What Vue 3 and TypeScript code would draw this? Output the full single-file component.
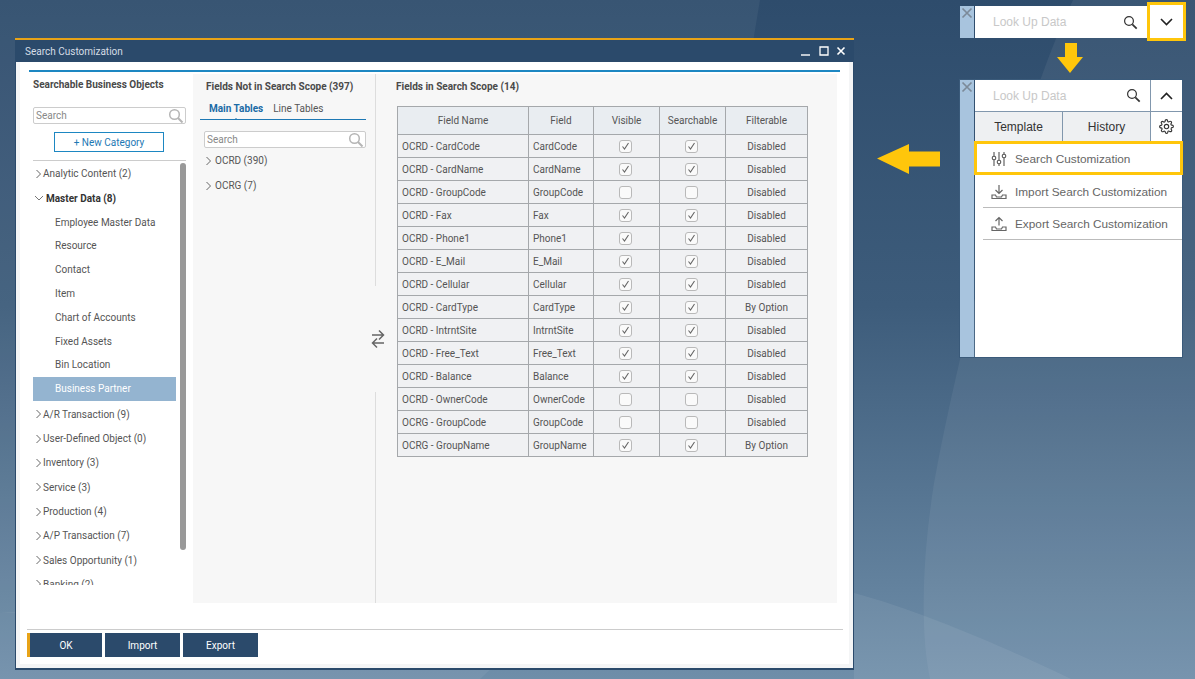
<template>
  <div class="desktop">
    <svg class="wallpaper" viewBox="0 0 1195 679" preserveAspectRatio="none">
      <defs>
        <linearGradient id="bgGrad" x1="0" y1="0" x2="0" y2="1">
          <stop offset="0" stop-color="#2e4c6c" />
          <stop offset="0.45" stop-color="#3d5c7b" />
          <stop offset="1" stop-color="#6f8ea9" />
        </linearGradient>
      </defs>
      <rect width="1195" height="679" fill="url(#bgGrad)" />
      <path d="M1073 0 C1020 110 960 340 934 483 C925 540 918 620 930 679 L1195 679 L1195 0 Z" fill="#fff" opacity="0.06" />
      <path d="M0 0 H760 L740 120 V613 H0 Z" fill="#fff" opacity="0.05" />
      <path d="M854 593 C925 612 1010 650 1071 679 L854 679 Z" fill="#fff" opacity="0.07" />
      <path d="M0 613 C150 600 400 620 492 668 L480 679 L0 679 Z" fill="#fff" opacity="0.06" />
    </svg>

    <!-- main window -->
    <section class="window">
      <header class="titlebar">
        <span>Search Customization</span>
        <div class="win-btns">
          <svg width="12" height="12" viewBox="0 0 12 12"><path d="M1 10h9" stroke="#fff" stroke-width="1.4" /></svg>
          <svg width="12" height="12" viewBox="0 0 12 12"><path d="M2 2h8v8H2z" fill="none" stroke="#fff" stroke-width="1.3" /></svg>
          <svg width="12" height="12" viewBox="0 0 12 12"><path d="M2.500 2.500l7 7M9.500 2.500l-7 7" stroke="#fff" stroke-width="1.6" /></svg>
        </div>
      </header>

      <div class="win-body">
        <div class="blue-line"></div>
        <div class="columns">
          <!-- left column -->
          <aside class="objects">
            <h3 class="objects-title">Searchable Business Objects</h3>
            <div class="searchbox">
              <span>Search</span>
              <svg width="16" height="16" viewBox="0 0 16 16"><circle cx="6.500" cy="6.500" r="4.800" fill="none" stroke="#b5b5b5" stroke-width="1.500" /><path d="M10 10l4.500 4.500" stroke="#b5b5b5" stroke-width="2" /></svg>
            </div>
            <button class="new-cat">+ New Category</button>
            <div class="tree-wrap">
              <ul class="tree">
                <li v-for="item in tree" :key="item.name" class="tree-item" :class="{ parent: item.open, child: item.child, selected: item.selected }">
                  <svg v-if="!item.child" class="chev" width="8" height="10" viewBox="0 0 8 10">
                    <path v-if="item.open" d="M0 3l4 4 4-4" fill="none" stroke="#777" stroke-width="1" />
                    <path v-else d="M1.500 1l4 4-4 4" fill="none" stroke="#666" stroke-width="1" />
                  </svg>
                  <span>{{ item.name }}</span>
                </li>
              </ul>
              <div class="thumb"></div>
            </div>
          </aside>

          <!-- gray panel -->
          <div class="scope-panel">
            <div class="not-in-scope">
              <h3 class="panel-title">Fields Not in Search Scope (397)</h3>
              <div class="tabs">
                <span class="tab active">Main Tables</span>
                <span class="tab">Line Tables</span>
              </div>
              <div class="searchbox small">
                <span>Search</span>
                <svg width="16" height="16" viewBox="0 0 16 16"><circle cx="6.500" cy="6.500" r="4.800" fill="none" stroke="#b5b5b5" stroke-width="1.500" /><path d="M10 10l4.500 4.500" stroke="#b5b5b5" stroke-width="2" /></svg>
              </div>
              <div v-for="t in tables" :key="t" class="table-node">
                <svg class="chev" width="8" height="10" viewBox="0 0 8 10"><path d="M1.500 1l4 4-4 4" fill="none" stroke="#666" stroke-width="1" /></svg>
                <span>{{ t }}</span>
              </div>
            </div>

            <div class="splitter">
              <div class="swap">
                <svg width="14" height="20" viewBox="0 0 14 20">
                  <path d="M1 6h11.500M8 1.500l4.500 4.500L8 10.500" fill="none" stroke="#666" stroke-width="1.500" />
                  <path d="M13 14H1.500M6 9.500L1.500 14 6 18.500" fill="none" stroke="#666" stroke-width="1.500" />
                </svg>
              </div>
            </div>

            <div class="in-scope">
              <h3 class="panel-title">Fields in Search Scope (14)</h3>
              <table class="fields">
                <thead>
                  <tr>
                    <th class="c1">Field Name</th>
                    <th class="c2">Field</th>
                    <th class="c3">Visible</th>
                    <th class="c4">Searchable</th>
                    <th class="c5">Filterable</th>
                  </tr>
                </thead>
                <tbody>
                  <tr v-for="r in rows" :key="r.name">
                    <td>{{ r.name }}</td>
                    <td>{{ r.field }}</td>
                    <td class="mid"><span class="check"><svg v-if="r.visible" width="9" height="9" viewBox="0 0 9 9"><path d="M1.500 4.500l2 2.500 4-6" fill="none" stroke="#666" stroke-width="1.100" /></svg></span></td>
                    <td class="mid"><span class="check"><svg v-if="r.searchable" width="9" height="9" viewBox="0 0 9 9"><path d="M1.500 4.500l2 2.500 4-6" fill="none" stroke="#666" stroke-width="1.100" /></svg></span></td>
                    <td class="mid">{{ r.filter }}</td>
                  </tr>
                </tbody>
              </table>
            </div>
          </div>
        </div>

        <footer class="win-foot">
          <button class="btn first">OK</button>
          <button class="btn">Import</button>
          <button class="btn">Export</button>
        </footer>
      </div>
    </section>

    <!-- collapsed lookup -->
    <div class="lookup collapsed">
      <div class="close-strip"><svg width="12" height="12" viewBox="0 0 12 12"><path d="M1.500 1.500l9 9M10.500 1.500l-9 9" stroke="#7c8a99" stroke-width="1.700" /></svg></div>
      <div class="lookup-bar">
        <span class="lookup-text">Look Up Data</span>
        <svg class="mag" width="15" height="15" viewBox="0 0 15 15"><circle cx="6" cy="6" r="4.400" fill="none" stroke="#333" stroke-width="1.200" /><path d="M9.300 9.300l4.400 4.400" stroke="#333" stroke-width="1.700" /></svg>
      </div>
      <div class="toggle highlight"><svg width="13" height="8" viewBox="0 0 13 8"><path d="M1 1l5.500 5.500L12 1" fill="none" stroke="#222" stroke-width="1.600" /></svg></div>
    </div>

    <svg class="arrow arrow-down" width="26" height="30" viewBox="0 0 26 30"><path d="M8 0h12v14h6L13 30 0 14h8z" fill="#ffc60b" /></svg>

    <!-- expanded lookup -->
    <div class="lookup expanded">
      <div class="close-strip"><svg width="12" height="12" viewBox="0 0 12 12"><path d="M1.500 1.500l9 9M10.500 1.500l-9 9" stroke="#7c8a99" stroke-width="1.700" /></svg></div>
      <div class="lookup-main">
        <div class="lookup-top">
          <div class="lookup-bar">
            <span class="lookup-text">Look Up Data</span>
            <svg class="mag" width="15" height="15" viewBox="0 0 15 15"><circle cx="6" cy="6" r="4.400" fill="none" stroke="#333" stroke-width="1.200" /><path d="M9.300 9.300l4.400 4.400" stroke="#333" stroke-width="1.700" /></svg>
          </div>
          <div class="toggle"><svg width="13" height="8" viewBox="0 0 13 8"><path d="M1 7l5.500-5.500L12 7" fill="none" stroke="#222" stroke-width="1.600" /></svg></div>
        </div>
        <div class="lookup-tabs">
          <div class="lk-tab tpl">Template</div>
          <div class="lk-tab hist">History</div>
          <div class="lk-gear">
            <svg width="15" height="15" viewBox="0 0 24 24" fill="none" stroke="#333" stroke-width="1.800"><circle cx="12" cy="12" r="3.500" /><path d="M19.400 15a1.650 1.650 0 0 0 .33 1.820l.06.06a2 2 0 1 1-2.830 2.830l-.06-.06a1.650 1.650 0 0 0-2.800 1.170V21a2 2 0 1 1-4 0v-.09A1.650 1.650 0 0 0 7.300 19.800l-.06.06a2 2 0 1 1-2.830-2.830l.06-.06a1.650 1.650 0 0 0-1.170-2.800H3a2 2 0 1 1 0-4h.09A1.650 1.650 0 0 0 4.200 7.300l-.06-.06a2 2 0 1 1 2.830-2.830l.06.06a1.650 1.650 0 0 0 2.800-1.170V3a2 2 0 1 1 4 0v.09a1.650 1.650 0 0 0 2.800 1.170l.06-.06a2 2 0 1 1 2.830 2.830l-.06.06a1.650 1.650 0 0 0 1.170 2.800H21a2 2 0 1 1 0 4h-.09A1.650 1.650 0 0 0 19.400 15z" /></svg>
          </div>
        </div>
        <div class="lk-item hot">
          <svg width="16" height="16" viewBox="0 0 16 16" fill="none" stroke="#555" stroke-width="1.100"><path d="M3 1v4M3 9v6M8 1v8M8 13v2M13 1v2M13 7v8" /><circle cx="3" cy="7" r="1.800" /><circle cx="8" cy="11" r="1.800" /><circle cx="13" cy="5" r="1.800" /></svg>
          <span>Search Customization</span>
        </div>
        <div class="lk-item">
          <svg width="16" height="16" viewBox="0 0 16 16" fill="none" stroke="#666" stroke-width="1.200"><path d="M8 1v8M4.500 6l3.500 3.500L11.500 6" /><path d="M1 11h3.500l1 2h5l1-2H15v3.500H1z" /></svg>
          <span>Import Search Customization</span>
        </div>
        <div class="lk-item">
          <svg width="16" height="16" viewBox="0 0 16 16" fill="none" stroke="#666" stroke-width="1.200"><path d="M8 9.500V1.500M4.500 5L8 1.500 11.500 5" /><path d="M1 11h3.500l1 2h5l1-2H15v3.500H1z" /></svg>
          <span>Export Search Customization</span>
        </div>
      </div>
    </div>

    <svg class="arrow arrow-left" width="63" height="30" viewBox="0 0 63 30"><path d="M0 14.500L32 0v7.500h31v15H32V30z" fill="#ffc60b" /></svg>
  </div>
</template>

<script setup lang="ts">
interface TreeItem {
  name: string
  open?: boolean
  child?: boolean
  selected?: boolean
}

interface FieldRow {
  name: string
  field: string
  visible: boolean
  searchable: boolean
  filter: string
}

const tree: TreeItem[] = [
  { name: 'Analytic Content (2)' },
  { name: 'Master Data (8)', open: true },
  { name: 'Employee Master Data', child: true },
  { name: 'Resource', child: true },
  { name: 'Contact', child: true },
  { name: 'Item', child: true },
  { name: 'Chart of Accounts', child: true },
  { name: 'Fixed Assets', child: true },
  { name: 'Bin Location', child: true },
  { name: 'Business Partner', child: true, selected: true },
  { name: 'A/R Transaction (9)' },
  { name: 'User-Defined Object (0)' },
  { name: 'Inventory (3)' },
  { name: 'Service (3)' },
  { name: 'Production (4)' },
  { name: 'A/P Transaction (7)' },
  { name: 'Sales Opportunity (1)' },
  { name: 'Banking (2)' }
]

const tables = ['OCRD (390)', 'OCRG (7)']

function row(table: string, field: string, visible = true, searchable = true, filter = 'Disabled'): FieldRow {
  return { name: `${table} - ${field}`, field, visible, searchable, filter }
}

const rows: FieldRow[] = [
  row('OCRD', 'CardCode'),
  row('OCRD', 'CardName'),
  row('OCRD', 'GroupCode', false, false),
  row('OCRD', 'Fax'),
  row('OCRD', 'Phone1'),
  row('OCRD', 'E_Mail'),
  row('OCRD', 'Cellular'),
  row('OCRD', 'CardType', true, true, 'By Option'),
  row('OCRD', 'IntrntSite'),
  row('OCRD', 'Free_Text'),
  row('OCRD', 'Balance'),
  row('OCRD', 'OwnerCode', false, false),
  row('OCRG', 'GroupCode', false, false),
  row('OCRG', 'GroupName', true, true, 'By Option')
]
</script>

<style>
html, body {
  margin: 0;
  height: 100%;
  overflow: hidden;
}
</style>

<style scoped>
.desktop {
  position: relative;
  width: 1195px;
  height: 679px;
  overflow: hidden;
  font-family: Roboto, "Noto Sans", sans-serif;
  font-size: 10px;
  color: #555;
}

.wallpaper {
  position: absolute;
  inset: 0;
  width: 100%;
  height: 100%;
}

.window {
  position: absolute;
  left: 15px;
  top: 38px;
  width: 839px;
  height: 632px;
  display: flex;
  flex-direction: column;
  border-top: 2px solid #e8a317;
  box-sizing: border-box;
  background: #2b4a6b;
  padding: 0 1px 2px;
}

.titlebar {
  height: 22px;
  flex: none;
  display: flex;
  align-items: center;
  justify-content: space-between;
  padding: 0 6px 0 9px;
  color: #d5dde6;
  font-size: 10px;
}

.win-btns {
  display: flex;
  gap: 5.500px;
}

.win-body {
  flex: 1;
  background: #fff;
  border: 4px solid #f4f5f6;
  border-top-width: 0;
  display: flex;
  flex-direction: column;
  padding: 8px 9px 7px;
  min-height: 0;
}

.blue-line {
  height: 2px;
  background: #1d87c2;
  flex: none;
}

.columns {
  flex: 1;
  display: flex;
  min-height: 0;
}

.objects {
  width: 164px;
  flex: none;
  padding: 3px 0 0 4px;
  box-sizing: border-box;
  display: flex;
  flex-direction: column;
}

.objects-title, .panel-title {
  margin: 0;
  font-size: 10px;
  line-height: 14px;
  font-weight: bold;
  color: #4a4a4a;
  white-space: nowrap;
}

.objects-title {
  height: 32px;
  padding-top: 3px;
  box-sizing: border-box;
}

.searchbox {
  height: 17px;
  box-sizing: border-box;
  border: 1px solid #ccc;
  border-radius: 2px;
  display: flex;
  align-items: center;
  justify-content: space-between;
  padding: 0 1px 0 2px;
  background: #fff;
  color: #888;
  width: 153px;
  flex: none;
}

.new-cat {
  margin: 8px 0 0 21px;
  width: 110px;
  height: 20px;
  box-sizing: border-box;
  border: 1px solid #1d87c2;
  background: #fff;
  color: #1d78b4;
  font: inherit;
  padding: 0;
  flex: none;
}

.tree-wrap {
  margin-top: 8px;
  border-top: 1px solid #ccc;
  width: 153px;
  flex: none;
  height: 424px;
  position: relative;
  overflow: hidden;
}

.tree {
  list-style: none;
  margin: 0;
  padding: 0;
}

.tree-item {
  height: 24.300px;
  display: flex;
  align-items: center;
  padding-left: 2px;
  width: 143px;
  box-sizing: border-box;
}

.tree-item:first-child {
  height: 25px;
}

.tree-item.parent {
  font-weight: bold;
  color: #333;
  gap: 3px;
}

.tree-item.child {
  height: 23.800px;
  padding-left: 22px;
}

.tree-item.selected {
  background: #94b4d0;
  color: #fff;
  margin-bottom: 1.500px;
}

.thumb {
  position: absolute;
  right: 0;
  top: 2px;
  width: 6px;
  height: 387px;
  background: #999;
  border-radius: 3px;
}

.scope-panel {
  width: 644px;
  flex: none;
  margin: 2px 0 26px 0;
  background: #f7f7f7;
  display: flex;
}

.not-in-scope {
  width: 182px;
  flex: none;
  padding: 6px 9px 0 7px;
  box-sizing: border-box;
}

.not-in-scope .panel-title {
  margin-left: 6px;
}

.tabs {
  display: flex;
  gap: 10px;
  margin-top: 6px;
  height: 20px;
  box-sizing: border-box;
  border-bottom: 1.500px solid #1d78b4;
  padding: 0 0 3px 9px;
  align-items: center;
}

.tab {
  position: relative;
}

.tab.active {
  color: #1b6ba6;
  font-weight: bold;
}

.tab.active::after {
  content: '';
  position: absolute;
  left: 50%;
  bottom: -6px;
  margin-left: -2.500px;
  border: 2.500px solid transparent;
  border-top: 0;
  border-bottom-color: #1d78b4;
}

.not-in-scope .searchbox {
  margin: 11px 0 0 4px;
  width: 162px;
}

.table-node {
  display: flex;
  align-items: center;
  gap: 2px;
  height: 25px;
  padding-left: 5px;
}

.splitter {
  width: 21px;
  flex: none;
  position: relative;
  border-left: 1px solid #ddd;
  box-sizing: border-box;
}

.swap {
  position: absolute;
  left: -7px;
  top: 212px;
  height: 106px;
  width: 18px;
  background: #f7f7f7;
  display: flex;
  align-items: center;
  justify-content: center;
}

.in-scope {
  flex: 1;
  padding-top: 6px;
}

.fields {
  margin: 12px 0 0 1px;
  border-collapse: collapse;
  table-layout: fixed;
  width: 411px;
  background: #f0f1f3;
}

.fields th, .fields td {
  border: 1px solid #a5a8ab;
  padding: 0 4px;
  height: 23px;
  font-weight: normal;
  box-sizing: border-box;
  white-space: nowrap;
  overflow: hidden;
}

.fields th {
  height: 28px;
  background: #e9edf1;
  text-align: center;
}

.c1 { width: 131px; }
.c2 { width: 65px; }
.c3 { width: 66px; }
.c4 { width: 66px; }
.c5 { width: 82px; }

.fields td.mid {
  text-align: center;
}

.check {
  display: inline-flex;
  width: 13px;
  height: 13px;
  box-sizing: border-box;
  border: 1px solid #b9b9b9;
  border-radius: 3px;
  background: #fafafa;
  align-items: center;
  justify-content: center;
  vertical-align: middle;
  margin: 1px 2px 0 0;
}

.win-foot {
  flex: none;
  height: 27px;
  border-top: 1px solid #ccc;
  display: flex;
  gap: 3px;
  align-items: flex-end;
  margin: 0 -3px 0 -2px;
}

.btn {
  width: 75px;
  height: 24px;
  background: #2b4a6b;
  border: 0;
  color: #fff;
  font: inherit;
  padding: 0;
}

.btn.first {
  border-left: 3px solid #e8a317;
}

.chev {
  flex: none;
}

/* lookup widgets (Liberation Sans like the original) */
.lookup {
  position: absolute;
  display: flex;
  font-family: "Liberation Sans", sans-serif;
}

.collapsed {
  left: 960px;
  top: 6px;
  width: 223px;
  height: 32px;
}

.expanded {
  left: 960px;
  top: 80px;
  width: 222px;
  height: 277px;
  box-shadow: 0 0 0 1px #3a5a7a;
}

.close-strip {
  width: 14px;
  flex: none;
  background: #a8c4de;
  display: flex;
  justify-content: center;
  align-items: flex-start;
  padding-top: 1px;
  box-sizing: border-box;
  margin-right: 1px;
}

.lookup-bar {
  flex: 1;
  display: flex;
  align-items: center;
  justify-content: space-between;
  background: #fff;
  padding: 0 9px 0 18px;
}

.lookup-text {
  color: #c8c8c8;
  font-size: 12px;
}

.toggle {
  width: 32px;
  flex: none;
  background: #fff;
  display: flex;
  align-items: center;
  justify-content: center;
  box-sizing: border-box;
}

.toggle.highlight {
  outline: 3px solid #ffc60b;
  height: 33px;
  width: 33px;
  margin: -1px 0 0 3px;
}

.lookup-main {
  flex: 1;
  background: #fff;
  display: flex;
  flex-direction: column;
}

.lookup-top {
  display: flex;
  height: 32px;
  border-bottom: 1px solid #8197ad;
  flex: none;
  box-sizing: border-box;
}

.lookup-top .toggle {
  border-left: 1px solid #8197ad;
}

.lookup-tabs {
  display: flex;
  height: 29px;
  flex: none;
}

.lk-tab {
  background: #eef0f2;
  color: #333;
  font-size: 12px;
  display: flex;
  align-items: center;
  justify-content: center;
  border-right: 1px solid #8197ad;
  box-sizing: border-box;
}

.tpl { width: 88px; }
.hist { width: 88px; }

.lk-gear {
  flex: 1;
  display: flex;
  align-items: center;
  justify-content: center;
}

.lk-item {
  height: 32.500px;
  display: flex;
  align-items: center;
  gap: 8px;
  margin-left: 8px;
  padding: 2px 0 0 8px;
  border-bottom: 1px solid #bbb;
  color: #666;
  font-size: 11.800px;
  box-sizing: border-box;
  flex: none;
}

.lk-item.hot {
  height: 34px;
  margin-left: -1px;
  margin-right: -1px;
  border: 3px solid #ffc60b;
  padding: 2px 0 0 14px;
}

.arrow {
  position: absolute;
}

.arrow-down {
  left: 1057px;
  top: 43px;
}

.arrow-left {
  left: 877px;
  top: 144px;
}
</style>
